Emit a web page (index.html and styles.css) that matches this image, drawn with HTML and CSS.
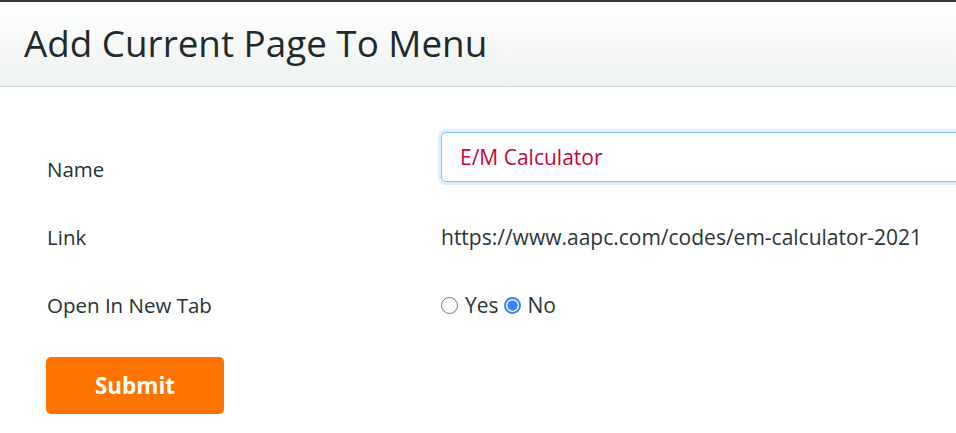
FILE: index.html
```html
<!DOCTYPE html>
<html lang="en">
<head>
<meta charset="utf-8">
<title>Add Current Page To Menu</title>
<link rel="stylesheet" href="styles.css">
</head>
<body>
<div class="modal">
  <div class="modal-header">
    <h1 class="modal-title">Add Current Page To Menu</h1>
  </div>
  <form class="modal-body">
    <div class="row row-name">
      <label class="label">Name</label>
      <div class="field">
        <input class="input" type="text" value="E/M Calculator">
      </div>
    </div>
    <div class="row row-link">
      <span class="label">Link</span>
      <div class="field link-text">https://www.aapc.com/codes/em-calculator-2021</div>
    </div>
    <div class="row row-tab">
      <span class="label">Open In New Tab</span>
      <div class="field radios">
        <label class="radio"><span class="dot"></span>Yes</label>
        <label class="radio"><span class="dot dot-on"></span>No</label>
      </div>
    </div>
    <div class="actions">
      <button type="button" class="btn">Submit</button>
    </div>
  </form>
</div>
</body>
</html>
```
FILE: styles.css
```css
html, body {
  margin: 0;
  padding: 0;
  background: #ffffff;
  overflow: hidden;
}
body {
  font-family: "Open Sans", "Liberation Sans", sans-serif;
  color: #263233;
  width: 956px;
  height: 433px;
}
.modal {
  border-top: 2px solid #2f3d3e;
}
.modal-header {
  height: 85px;
  box-sizing: border-box;
  border-bottom: 1px solid #d3dbdb;
  background: linear-gradient(#ffffff, #eef1f1);
  padding-left: 24px;
  display: flex;
  align-items: center;
}
.modal-title {
  margin: 0;
  font-weight: 400;
  font-size: 36.8px;
  color: #1f2a2b;
  line-height: 1;
  padding-bottom: 2px;
}
.modal-body {
  padding: 45px 0 0 47px;
  display: flex;
  flex-direction: column;
}
.row {
  display: flex;
  align-items: center;
}
.label {
  width: 394px;
  flex-shrink: 0;
  font-size: 20.5px;
  color: #263233;
}
.field {
  flex-shrink: 0;
}
.row-name {
  height: 50px;
  align-items: flex-end;
}
.row-name .label {
  margin-bottom: -1px;
}
.input {
  display: block;
  width: 540px;
  height: 50px;
  box-sizing: border-box;
  border: 1px solid #7cc8f0;
  border-radius: 5px;
  box-shadow: 0 0 0 3px rgba(178, 225, 250, 0.45);
  padding: 0 18px;
  font-family: "Open Sans", "Liberation Sans", sans-serif;
  font-size: 21px;
  color: #c4063a;
  outline: none;
}
.row-link {
  margin-top: 35px;
  height: 40px;
}
.link-text {
  font-size: 21px;
  color: #2b3536;
}
.row-tab {
  margin-top: 28px;
  height: 40px;
}
.radios {
  display: flex;
  align-items: center;
  font-size: 21px;
  color: #2b3536;
}
.radio {
  display: flex;
  align-items: center;
  margin-right: 5px;
}
.dot {
  width: 17px;
  height: 17px;
  box-sizing: border-box;
  border: 1px solid #767676;
  border-radius: 50%;
  margin-right: 7px;
  background: #fff;
}
.dot-on {
  border: 2px solid #3b82f6;
  background: radial-gradient(circle, #3b82f6 0 4.8px, #ffffff 5.4px);
}
.actions {
  margin-top: 32px;
}
.btn {
  display: block;
  width: 178px;
  height: 57px;
  margin-left: -1px;
  border: 0;
  border-radius: 5px;
  background: #ff7300;
  color: #ffffff;
  font-family: "Open Sans", "Liberation Sans", sans-serif;
  font-weight: 700;
  font-size: 22.5px;
  cursor: pointer;
}
```
